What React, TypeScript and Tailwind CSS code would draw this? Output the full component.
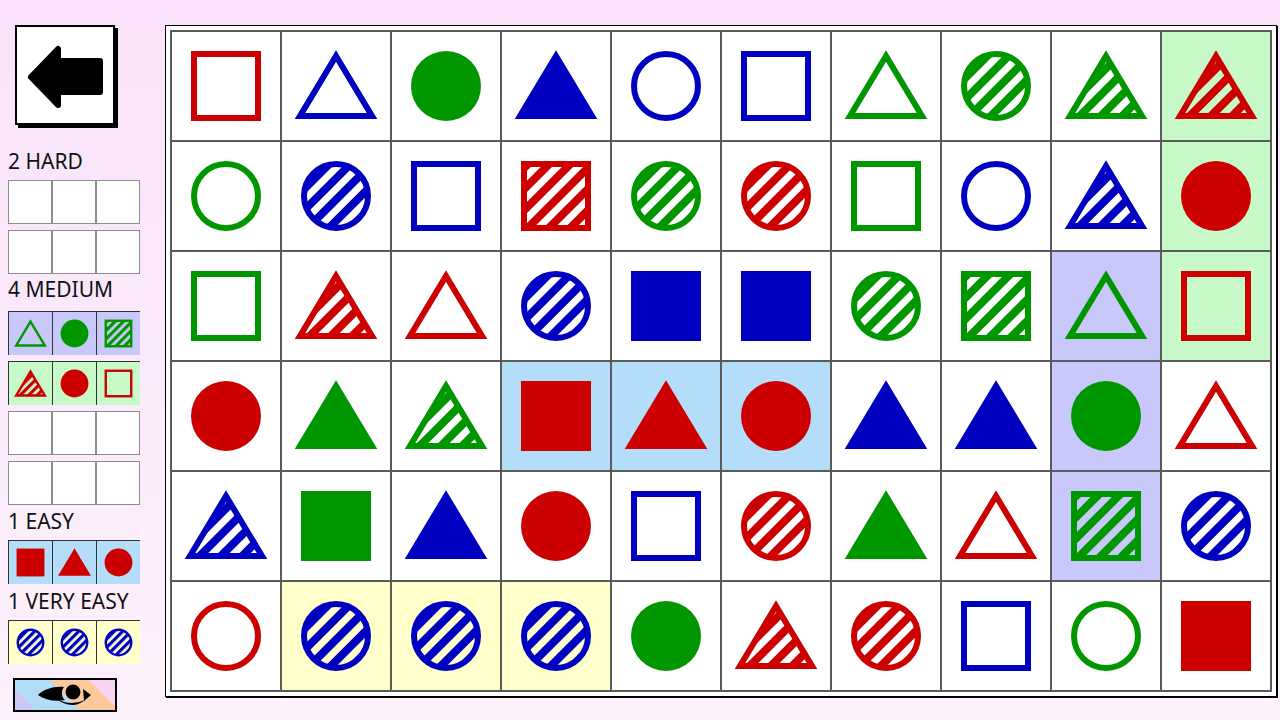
import React from "react";

const COLORS: Record<string, string> = {
  r: "#cc0000",
  g: "#009600",
  b: "#0000c0",
};

const BG: Record<string, string> = {
  G: "bg-[#c8f9c8]",
  L: "bg-[#c8c8fa]",
  B: "bg-[#b4ddfa]",
  Y: "bg-[#ffffcc]",
};

// shape code: type (s/t/c) + style (o outline, f filled, h hatched) + colour, optional bg letter
const BOARD = [
  "sor tob cfg tfb cob sob tog chg thg thrG",
  "cog chb sob shr chg chr sog cob thb cfrG",
  "sog thr tor chb sfb sfb chg shg togL sorG",
  "cfr tfg thg sfrB tfrB cfrB tfb tfb cfgL tor",
  "thb sfg tfb cfr sob chr tfg tor shgL chb",
  "cor chbY chbY chbY cfg thr chr sob cog sfr",
].map((row) => row.split(" "));

const TRI = "54,24 18,84 90,84";

function Shape({ code, id, size }: { code: string; id: string; size: number }) {
  const type = code[0];
  const style = code[1];
  const col = COLORS[code[2]];
  const pid = `hatch-${id}`;
  const fill = style === "f" ? col : style === "h" ? `url(#${pid})` : "none";

  return (
    <svg width={size} height={size} viewBox="0 0 108 108">
      {style === "h" && (
        <defs>
          <pattern
            id={pid}
            patternUnits="userSpaceOnUse"
            width="15"
            height="15"
            patternTransform="rotate(45)"
          >
            <rect x="0" y="0" width="8" height="15" fill={col} />
          </pattern>
        </defs>
      )}
      {type === "s" &&
        (style === "f" ? (
          <rect x="19" y="19" width="70" height="70" fill={col} />
        ) : (
          <rect x="22" y="22" width="64" height="64" fill={fill} stroke={col} strokeWidth="6" />
        ))}
      {type === "c" &&
        (style === "f" ? (
          <circle cx="54" cy="54" r="35" fill={col} />
        ) : (
          <circle cx="54" cy="54" r="32" fill={fill} stroke={col} strokeWidth="6" />
        ))}
      {type === "t" && (
        <polygon points={TRI} fill={fill} stroke={col} strokeWidth="6" strokeLinejoin="miter" />
      )}
    </svg>
  );
}

function MiniRow({ codes, tag }: { codes?: string[]; tag: string }) {
  if (!codes) {
    return (
      <div className="flex">
        {[0, 1, 2].map((i) => (
          <div key={i} className="w-[44px] h-[44px] bg-white border border-[#8c8c8c]" />
        ))}
      </div>
    );
  }
  return (
    <div className="flex">
      {codes.map((c, i) => {
        const bg = BG[c[3]] ?? "bg-white";
        return (
          <div
            key={i}
            className={`w-[44px] h-[44px] flex items-center justify-center border-l border-t border-[#333] ${bg}`}
          >
            <Shape code={c} id={`${tag}-${i}`} size={43} />
          </div>
        );
      })}
    </div>
  );
}

function Label({ text, className }: { text: string; className: string }) {
  return (
    <div
      className={`h-[21px] text-[21px] leading-[21px] text-[#111] font-['Noto_Sans',sans-serif] ${className}`}
    >
      {text}
    </div>
  );
}

function BackButton() {
  return (
    <div className="ml-[7px] mt-[25px] w-[100px] h-[100px] bg-white border-2 border-black shadow-[3px_3px_0_#000] flex items-center justify-center">
      <svg width="96" height="96" viewBox="0 0 96 96">
        <path
          d="M14 50 L41 22 L41 34 L83 34 L83 65 L41 65 L41 78 Z"
          fill="#000"
          stroke="#000"
          strokeWidth="6"
          strokeLinejoin="round"
        />
      </svg>
    </div>
  );
}

function EyeButton() {
  return (
    <div className="ml-[5px] mt-[14px] w-[104px] h-[34px] border-2 border-black bg-[linear-gradient(45deg,#cbc8f8_0%,#cbc8f8_16%,#b2dcf8_16%,#b2dcf8_50%,#fcc99c_50%,#fcc99c_80%,#f8d2f2_80%,#f8d2f2_100%)]">
      <svg width="100" height="30" viewBox="0 0 100 30">
        {/* upper lid */}
        <path d="M23 15 C29 9, 39 6, 49 7 C46 11, 46 17, 50 20 C40 22, 30 20, 23 15 Z" fill="#000" />
        {/* pupil */}
        <circle cx="58" cy="12" r="7.5" fill="#000" />
        {/* lower lid */}
        <path d="M40 18 Q55 27 70 20 Q57 31 40 18 Z" fill="#000" />
        {/* corner */}
        <path d="M68 9 L76 15 L69 21 Z" fill="#000" />
      </svg>
    </div>
  );
}

export default function App() {
  const find = (r: number, cs: number[]) => cs.map((c) => BOARD[r][c]);
  const col = (c: number, rs: number[]) => rs.map((r) => BOARD[r][c]);

  return (
    <div className="w-[1280px] h-[720px] flex bg-[linear-gradient(180deg,#f9e2f9_0%,#fbeafb_50%,#fdf2fc_100%)] font-['Noto_Sans',sans-serif] overflow-hidden">
      {/* Sidebar */}
      <div className="w-[160px] shrink-0 flex flex-col pl-[8px]">
        <BackButton />

        <Label text="2 HARD" className="mt-[26px]" />
        <div className="mt-[8px]">
          <MiniRow tag="h1" />
        </div>
        <div className="mt-[6px]">
          <MiniRow tag="h2" />
        </div>

        <Label text="4 MEDIUM" className="mt-[5px]" />
        <div className="mt-[11px]">
          <MiniRow tag="m1" codes={col(8, [2, 3, 4])} />
        </div>
        <div className="mt-[6px]">
          <MiniRow tag="m2" codes={col(9, [0, 1, 2])} />
        </div>
        <div className="mt-[6px]">
          <MiniRow tag="m3" />
        </div>
        <div className="mt-[6px]">
          <MiniRow tag="m4" />
        </div>

        <Label text="1 EASY" className="mt-[6px]" />
        <div className="mt-[8px]">
          <MiniRow tag="e1" codes={find(3, [3, 4, 5])} />
        </div>

        <Label text="1 VERY EASY" className="mt-[7px]" />
        <div className="mt-[8px]">
          <MiniRow tag="v1" codes={find(5, [1, 2, 3])} />
        </div>

        <EyeButton />
      </div>

      {/* Board */}
      <div className="pt-[25px] pl-[5px]">
        <div className="bg-white border border-black shadow-[1px_1px_0_#000] p-[4px]">
          <div className="grid grid-cols-[repeat(10,108px)] grid-rows-[repeat(6,108px)] gap-[2px] p-[2px] bg-[#5a5a5a]">
            {BOARD.map((row, r) =>
              row.map((c, i) => (
                <div
                  key={`${r}-${i}`}
                  className={`flex items-center justify-center ${BG[c[3]] ?? "bg-white"}`}
                >
                  <Shape code={c} id={`b-${r}-${i}`} size={108} />
                </div>
              ))
            )}
          </div>
        </div>
      </div>
    </div>
  );
}
